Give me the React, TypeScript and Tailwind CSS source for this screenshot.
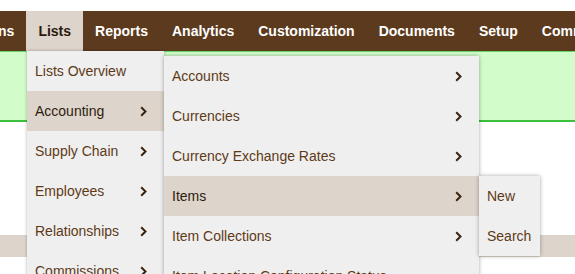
import React from "react";

const navItems = [
  "Transactions",
  "Lists",
  "Reports",
  "Analytics",
  "Customization",
  "Documents",
  "Setup",
  "Commerce",
];

const listsMenu = [
  { label: "Lists Overview", sub: false },
  { label: "Accounting", sub: true, active: true },
  { label: "Supply Chain", sub: true },
  { label: "Employees", sub: true },
  { label: "Relationships", sub: true },
  { label: "Commissions", sub: true },
];

const accountingMenu = [
  { label: "Accounts", sub: true },
  { label: "Currencies", sub: true },
  { label: "Currency Exchange Rates", sub: true },
  { label: "Items", sub: true, active: true },
  { label: "Item Collections", sub: true },
  { label: "Item Location Configuration Status", sub: false },
];

function Chevron() {
  return (
    <svg width="7" height="11" viewBox="0 0 7 11" className="shrink-0">
      <polyline
        points="1.2,1.2 5.5,5.5 1.2,9.8"
        fill="none"
        stroke="#3a230f"
        strokeWidth="2"
      />
    </svg>
  );
}

type Item = { label: string; sub: boolean; active?: boolean };

function MenuRow({ item }: { item: Item }) {
  return (
    <div
      className={`flex h-10 items-center justify-between pl-2 pr-[17px] whitespace-nowrap ${
        item.active ? "bg-[#ddd4cb] text-[#2e1c0c]" : "text-[#5e3a17]"
      }`}
    >
      <span>{item.label}</span>
      {item.sub && <Chevron />}
    </div>
  );
}

export default function App() {
  return (
    <div className="relative h-[274px] w-full overflow-hidden bg-white font-['Liberation_Sans',Arial,sans-serif] text-[14px]">
      <div className="h-[11px]" />
      <nav className="flex h-10 items-center bg-[#5c3a1d] whitespace-nowrap">
        {navItems.map((n, i) => (
          <div
            key={n}
            className={`flex h-full items-center px-3 font-bold ${
              n === "Lists" ? "bg-[#ddd4cb] text-[#2a1a0c]" : "text-white"
            } ${i === 0 ? "ml-[-84px]" : ""}`}
          >
            {n}
          </div>
        ))}
      </nav>
      <div className="h-[71px] border-t border-b-2 border-t-[#66d466] border-b-[#3cbf3c] bg-[#d2fcc9]" />
      <div className="h-[113px]" />
      <div className="h-[22px] bg-[#ddd5cc]" />

      <div className="absolute left-[27px] top-[51px] w-[137px] bg-[#efefef] shadow-[0_0_3px_rgba(0,0,0,0.3)]">
        {listsMenu.map((it) => (
          <MenuRow key={it.label} item={it} />
        ))}
      </div>

      <div className="absolute left-[164px] top-[56px] w-[315px] bg-[#efefef] shadow-[0_0_4px_rgba(0,0,0,0.35)]">
        {accountingMenu.map((it) => (
          <MenuRow key={it.label} item={it} />
        ))}
      </div>

      <div className="absolute left-[479px] top-[176px] w-[61px] bg-[#efefef] text-[#5e3a17] shadow-[0_0_4px_rgba(0,0,0,0.35)]">
        <div className="flex h-10 items-center px-2">New</div>
        <div className="flex h-10 items-center px-2">Search</div>
      </div>
    </div>
  );
}
